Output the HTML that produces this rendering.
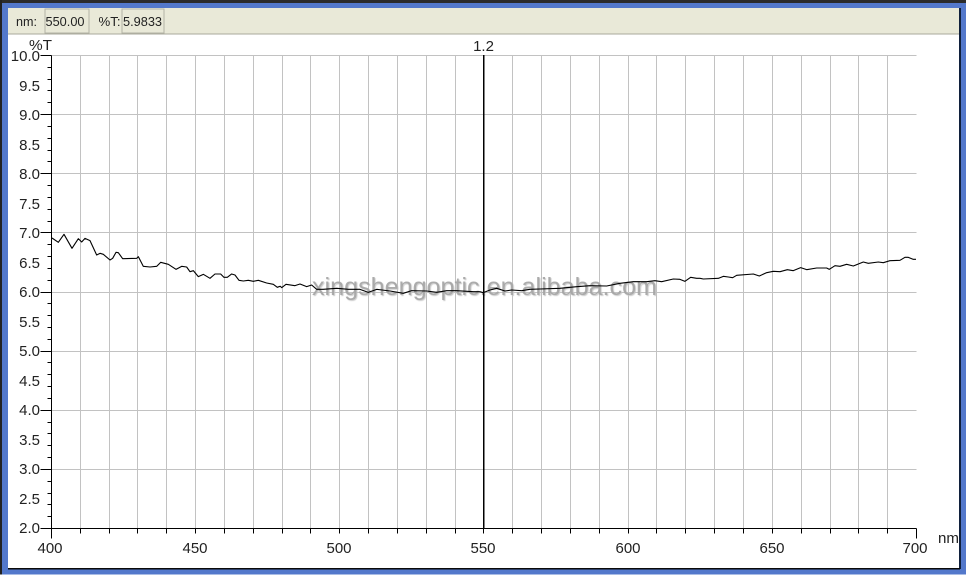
<!DOCTYPE html>
<html><head><meta charset="utf-8"><style>
html,body{margin:0;padding:0;background:#fff;width:967px;height:576px;overflow:hidden}
svg{display:block;font-family:"Liberation Sans",Arial,sans-serif}
text{fill:#222}
</style></head><body>
<svg width="967" height="576" viewBox="0 0 967 576" xmlns="http://www.w3.org/2000/svg">
<rect width="967" height="576" fill="#fff"/>
<rect x="0" y="0" width="966" height="574.5" fill="#5378cb"/>
<rect x="0" y="0" width="966" height="3" fill="#2b2b2b"/>
<rect x="0" y="0" width="2" height="574.5" fill="#222"/>
<rect x="8" y="8" width="952" height="561" fill="#fff"/>
<rect x="959" y="8" width="2" height="561" fill="#10203c"/>
<rect x="8" y="568" width="952" height="1.5" fill="#0a0a0a"/>
<rect x="8" y="8" width="951" height="26" fill="#e9e9d8"/>
<rect x="8" y="33.5" width="951" height="1" fill="#a9a99b"/>
<rect x="45" y="9" width="44" height="24" fill="#e9e9d8" stroke="#b4b4a6" stroke-width="1"/>
<rect x="122" y="9" width="42" height="24" fill="#e9e9d8" stroke="#b4b4a6" stroke-width="1"/>
<g font-size="12.5">
<text x="16" y="26" textLength="21" lengthAdjust="spacingAndGlyphs">nm:</text>
<text x="45.5" y="26" textLength="39" lengthAdjust="spacingAndGlyphs">550.00</text>
<text x="98.500" y="26" textLength="22" lengthAdjust="spacingAndGlyphs">%T:</text>
<text x="123" y="26" textLength="39" lengthAdjust="spacingAndGlyphs">5.9833</text>
</g>
<g transform="translate(.5 .5)" fill="none">
<path stroke="#c2c2c2" stroke-width="1" d="M51 55H916M51 114H916M51 173H916M51 232H916M51 292H916M51 351H916M51 410H916M51 469H916M80 55V528M109 55V528M137 55V528M166 55V528M195 55V528M224 55V528M253 55V528M282 55V528M310 55V528M339 55V528M368 55V528M397 55V528M426 55V528M455 55V528M512 55V528M541 55V528M570 55V528M599 55V528M628 55V528M656 55V528M685 55V528M714 55V528M743 55V528M772 55V528M801 55V528M830 55V528M858 55V528M887 55V528"/>
<path stroke="#000" stroke-width="1" d="M51 55V528H916M51 528V538M916 528V538M80 528V533M109 528V533M137 528V533M166 528V533M195 528V533M224 528V533M253 528V533M282 528V533M310 528V533M339 528V533M368 528V533M397 528V533M426 528V533M455 528V533M483 528V533M512 528V533M541 528V533M570 528V533M599 528V533M628 528V533M656 528V533M685 528V533M714 528V533M743 528V533M772 528V533M801 528V533M830 528V533M858 528V533M887 528V533"/>
<path stroke="#000" stroke-width="1" d="M40 55H51M47 67H51M47 79H51M47 90H51M47 102H51M40 114H51M47 126H51M47 138H51M47 150H51M47 161H51M40 173H51M47 185H51M47 197H51M47 209H51M47 221H51M40 232H51M47 244H51M47 256H51M47 268H51M47 280H51M40 292H51M47 303H51M47 315H51M47 327H51M47 339H51M40 351H51M47 362H51M47 374H51M47 386H51M47 398H51M40 410H51M47 422H51M47 433H51M47 445H51M47 457H51M40 469H51M47 481H51M47 493H51M47 504H51M47 516H51M40 528H51"/>
</g>
<text x="312" y="295" font-size="25" textLength="345" lengthAdjust="spacingAndGlyphs" style="fill:#a4a4a4;fill-opacity:.9;text-shadow:1px 1px 1px #c4c4c4">xingshengoptic.en.alibaba.com</text>
<g fill="none" stroke="#000" stroke-width="1.1" stroke-linejoin="round">
<path vector-effect="non-scaling-stroke" transform="translate(40 220) scale(.3333)" d="M36 54L55 67L72 43L96 85L115 56L125 66L135 55L150 62L170 105L180 100L190 103L210 120L218 115L228 97L235 98L248 116L290 115L295 110L310 139L330 141L350 139L362 127L385 133L408 148L425 139L440 141L450 155L460 152L475 170L490 163L510 175L525 162L542 162L552 172L562 172L575 162L585 165L597 181L610 183L625 181L640 184L655 181L680 189L700 193L712 202L720 199"/>
<path vector-effect="non-scaling-stroke" transform="translate(270 260) scale(.3333)" d="M30 78L35 83L48 73L75 77L90 72L110 80L125 75L140 88L160 88L200 85L235 88L270 88L295 97L320 88L360 93L400 100L425 92L470 93L500 97L530 92L560 92L610 95L630 95"/>
<path vector-effect="non-scaling-stroke" transform="translate(480 260) scale(.3333)" d="M0 95L10 98L30 90L50 85L75 93L95 90L125 92L150 88L180 87L240 85L290 80L330 77L380 78L420 70L460 65L500 65L525 62L545 65L580 57L600 58L615 64L632 52L650 55L660 55"/>
<path vector-effect="non-scaling-stroke" transform="translate(700 240) scale(.3333)" d="M0 115L10 117L55 115L70 109L85 111L98 113L110 106L160 102L178 108L200 98L220 94L240 95L262 89L280 92L302 83L320 89L350 84L380 84L388 88L405 77L420 79L440 73L460 78L490 66L505 70L535 66L550 68L570 62L600 61L615 52L625 52L640 58L648 58"/>
</g>
<rect x="483" y="55" width="1.5" height="473" fill="#000"/>
<g font-size="15" text-anchor="end">
<text x="40" y="61">10.0</text>
<text x="40" y="91">9.5</text>
<text x="40" y="120">9.0</text>
<text x="40" y="150">8.5</text>
<text x="40" y="179">8.0</text>
<text x="40" y="209">7.5</text>
<text x="40" y="238">7.0</text>
<text x="40" y="268">6.5</text>
<text x="40" y="297">6.0</text>
<text x="40" y="327">5.5</text>
<text x="40" y="356">5.0</text>
<text x="40" y="386">4.5</text>
<text x="40" y="415">4.0</text>
<text x="40" y="445">3.5</text>
<text x="40" y="474">3.0</text>
<text x="40" y="504">2.5</text>
<text x="40" y="533">2.0</text>
</g>
<g font-size="15" text-anchor="middle">
<text x="50" y="553">400</text>
<text x="195" y="553">450</text>
<text x="339" y="553">500</text>
<text x="483" y="553">550</text>
<text x="628" y="553">600</text>
<text x="772" y="553">650</text>
<text x="915" y="553">700</text>
<text x="483.500" y="51">1.2</text>
</g>
<text x="938" y="543" font-size="15" textLength="21" lengthAdjust="spacingAndGlyphs">nm</text>
<text x="29" y="50" font-size="15" textLength="23" lengthAdjust="spacingAndGlyphs">%T</text>
</svg>
</body></html>
